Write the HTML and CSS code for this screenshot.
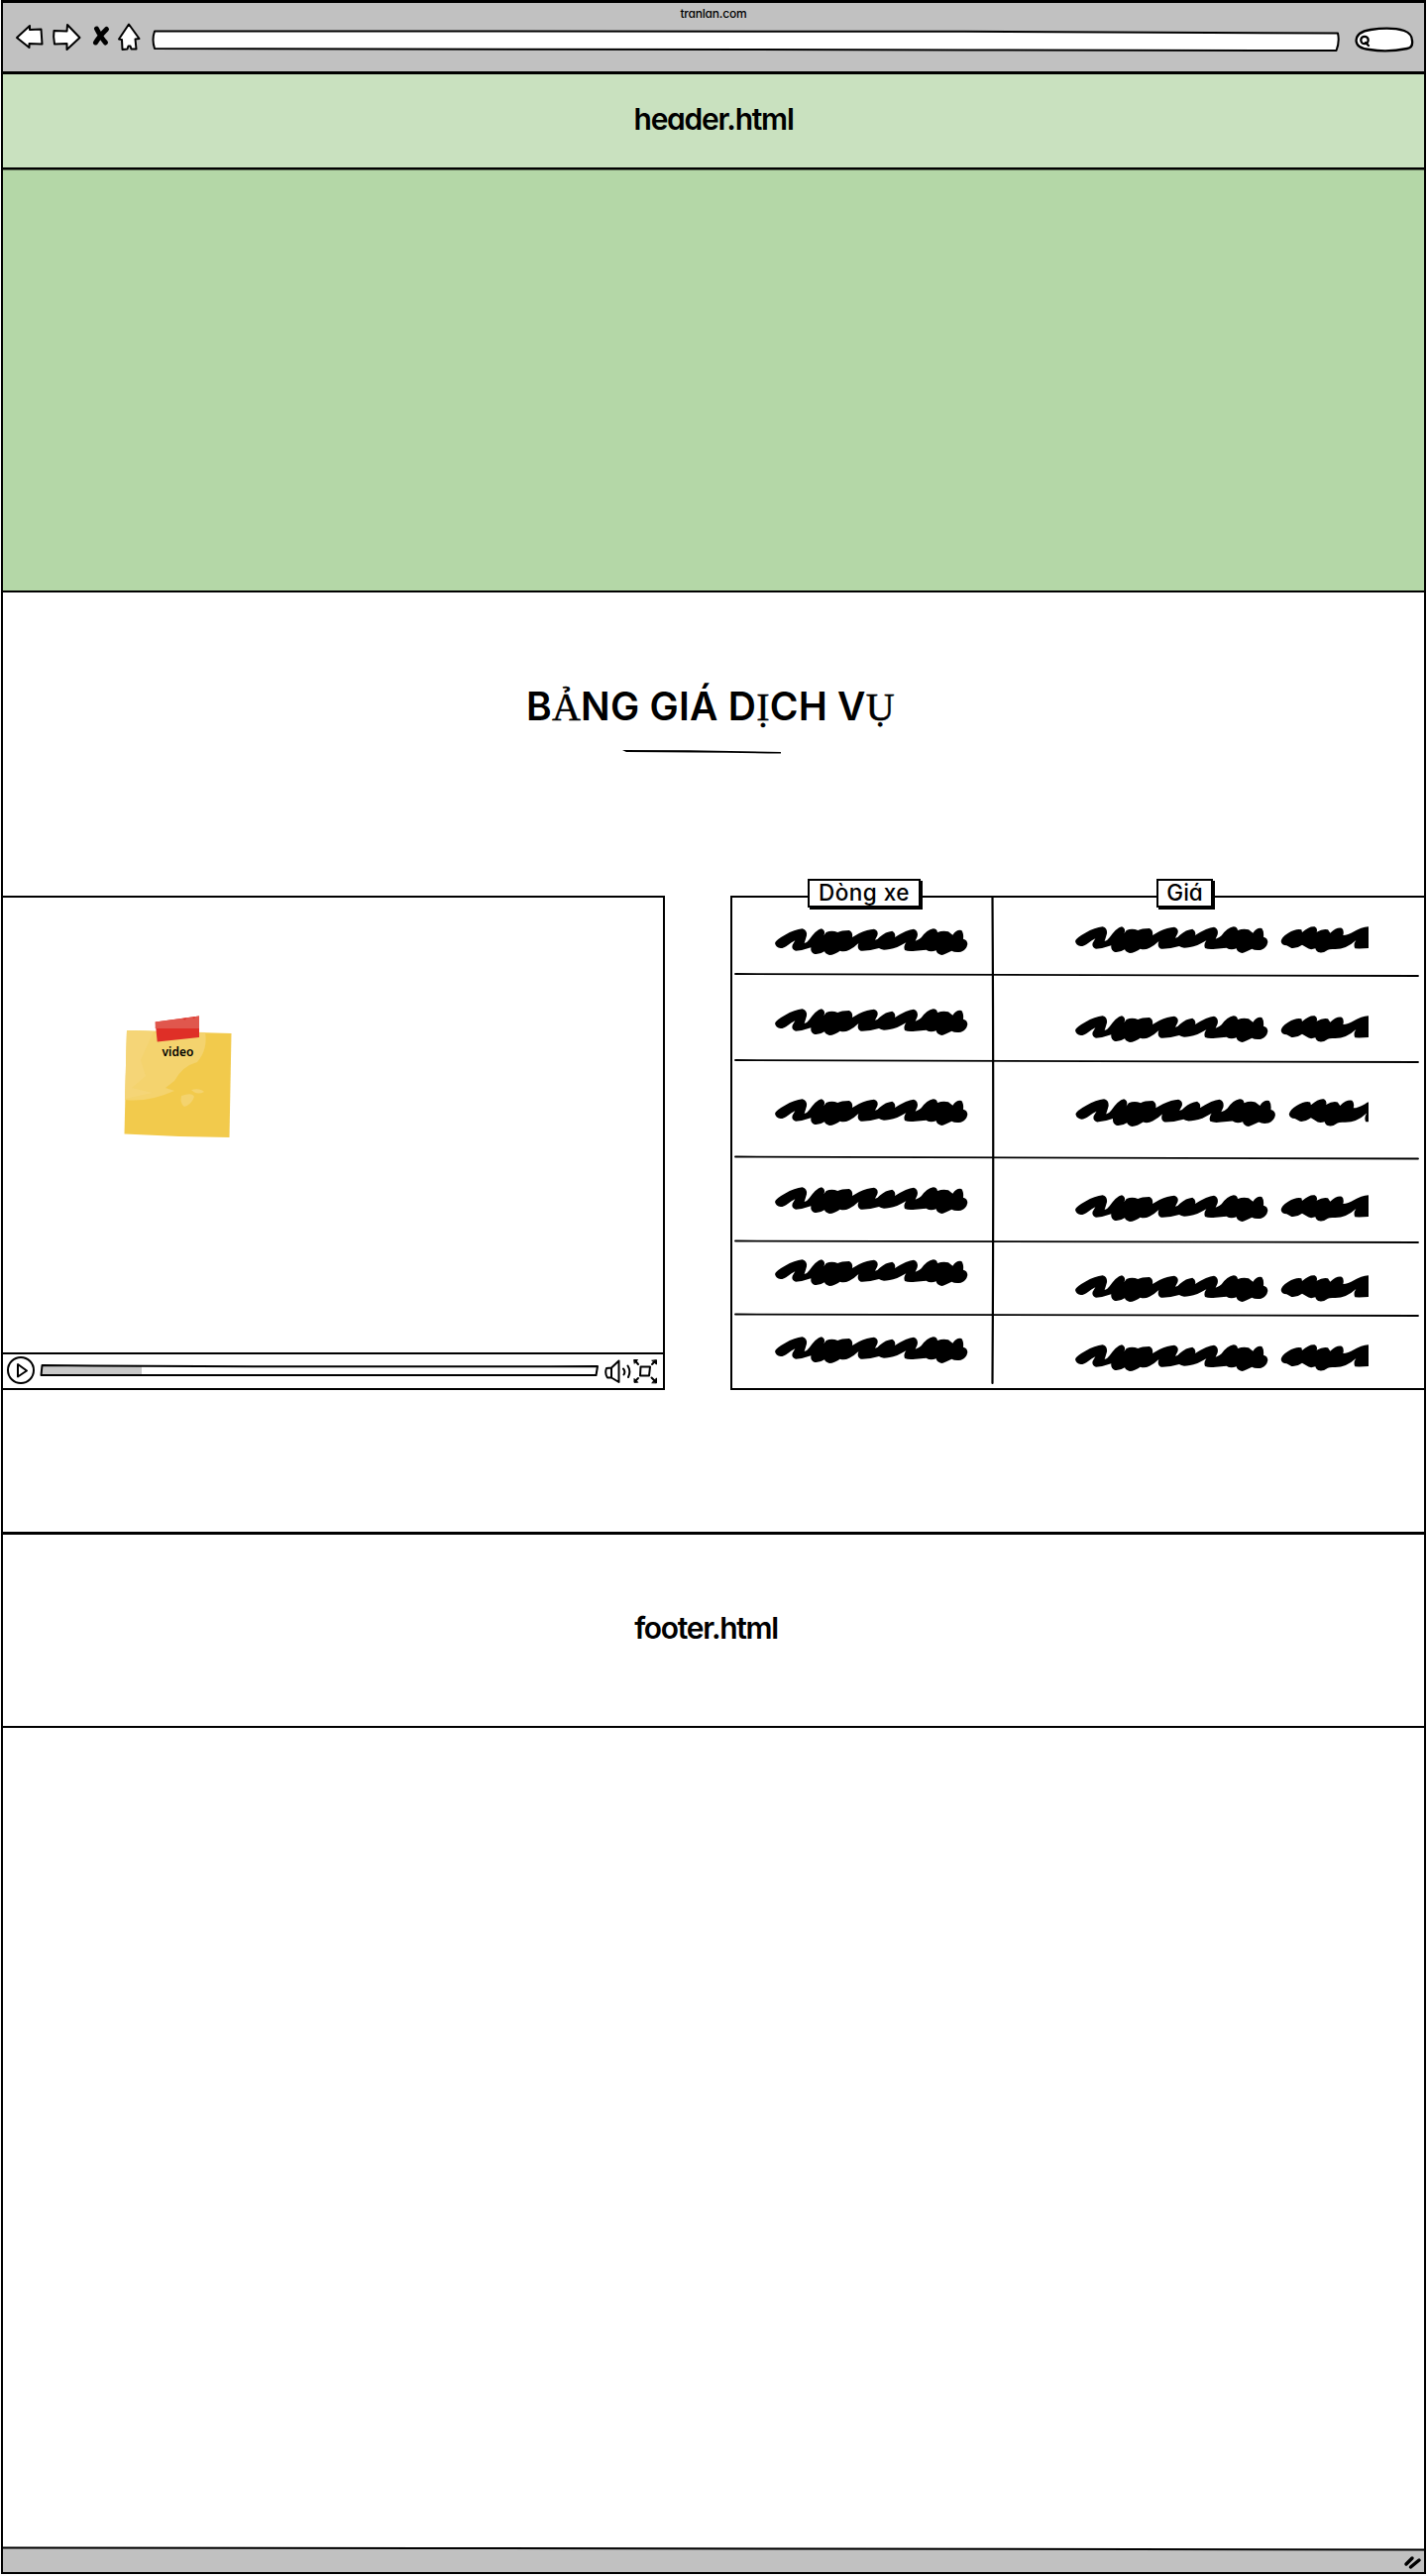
FILE: index.html
```html
<!DOCTYPE html>
<html lang="vi">
<head>
<meta charset="utf-8">
<title>tranlan.com</title>
<link rel="stylesheet" href="styles.css">
</head>
<body>
<svg class="defs" aria-hidden="true">
  <defs>
    <g id="word">
      <path d="M15 75Q17 65 45 50Q75 33 98 31Q113 35 111 52Q108 63 104 75Q112 74 119 64Q140 34 156 31Q170 37 163 52L170 42Q187 35 205 42Q215 36 240 36Q252 42 249 57L270 45Q295 33 315 32Q330 37 325 52L318 65Q326 64 332 56Q350 40 370 38Q382 45 378 57Q415 33 435 32Q450 37 446 55L440 68Q450 66 458 58Q475 34 494 31Q506 32 507 42Q525 35 540 40L553 50Q565 32 580 36Q587 45 585 62Q598 65 598 78Q595 95 578 101Q560 104 550 98Q530 108 520 111Q505 108 503 97Q485 104 473 95L440 98Q420 101 408 96Q403 85 412 73Q400 80 385 87Q360 95 345 95Q335 93 330 90Q300 99 275 98Q262 92 268 75Q255 88 240 95Q225 103 212 98Q195 110 180 111Q168 108 165 100Q150 110 135 108Q122 103 124 88Q100 97 78 98Q64 93 68 80L76 67Q65 72 55 80Q42 90 32 90Q18 88 15 75Z"/>
    </g>
    <g id="tail">
      <path d="M638 75Q640 62 660 50Q685 35 700 40L702 48Q725 28 740 31Q750 37 746 47Q765 36 780 40L787 50Q805 32 822 35Q830 42 826 57Q840 57 860 45Q880 33 903 31V96Q880 98 862 97Q856 85 865 72Q835 100 800 99Q785 98 780 101Q765 112 755 109Q745 108 742 97Q725 103 715 94L702 86Q685 98 670 96L655 88Q640 88 638 75Z"/>
    </g>
  </defs>
</svg>

<div class="browser">
  <header class="toolbar">
    <p class="page-title">tranlan.com</p>
    <div class="controls">
      <svg class="nav-icons" viewBox="0 0 148 34">
        <path d="M14 15L27 3L27 7L38.500 6.500L39.500 21.500L26.500 21L26.500 25Z"/>
        <path d="M51.500 8L64.500 8.500L65 2L77.500 15L64.500 27L64.500 21L52 21.500Q50.500 14 51.500 8Z"/>
        <path class="close" d="M94.500 6Q99 15 103.500 20M104.500 6.500Q97 14 93.500 20"/>
        <path d="M127 1.500L137.500 16L133.500 16.500L134.500 26.500L129.500 26.500L128.500 23.500L126.500 23.500L125.500 26.500L120.500 27L120 17L117 16.500Z"/>
      </svg>
      <svg class="address" viewBox="0 0 1200 24">
        <path d="M4 3.500C500 3 800 3 1198 5.500Q1200 14 1196.500 23C800 23 500 21 4 21Q1 12 4 3.500Z"/>
      </svg>
      <svg class="search" viewBox="0 0 62 28">
        <path d="M17 4Q38 1 51 5Q59 8 59 15Q60 22 54 23Q34 27 16 24Q3 23 2.500 15Q3 6 17 4Z"/>
        <circle cx="11" cy="14.500" r="3.700"/><path d="M12 17L15 20"/>
      </svg>
    </div>
  </header>

  <section class="site-header">header.html</section>
  <section class="banner"></section>

  <main class="content">
    <h1>B<span>Ả</span>NG GIÁ D<span>Ị</span>CH V<span>Ụ</span></h1>
    <svg class="underline" viewBox="0 0 160 5"><path d="M0 0Q80 0 160 2V3.500Q90 2.500 4 2Z"/></svg>

    <div class="columns">
      <div class="player">
        <div class="screen">
          <div class="note">
            <svg viewBox="0 0 112 126">
              <path fill="#f2ca4c" d="M4 15L109.500 18L107.500 123Q54 122.500 1.500 119.500Z"/>
              <path fill="#f4d36e" d="M4 15L83 17Q86 34 75 47Q60 51 52 66L43 73L52 76Q25 88 2 85Z"/>
              <path fill="#f5d77d" d="M4 15L31 16L18 45L23 61L9 73L30 78L2 84Z" opacity=".6"/>
              <path fill="#f4d36e" d="M59 81Q70 77 72 82Q69 90 62 92Q57 88 59 81ZM69 75Q78 73 82 77Q75 81 69 75Z"/>
              <path fill="#df2f27" d="M32.700 6.500L77 .5V22L34.700 26.500Z"/>
              <path fill="#e0574d" d="M32.700 6.500L77 .5V13H32.700Z"/>
              <path fill="#df2f27" d="M60 3.500L64 2.500L63 4.500ZM70 2L73 1.500L72 3Z"/>
            </svg>
            <p>video</p>
          </div>
        </div>
        <div class="player-bar">
          <svg class="play" viewBox="0 0 30 30"><circle cx="15" cy="15" r="13"/><path d="M12 9V21.500L21 15.500Z"/></svg>
          <svg class="track" viewBox="0 0 566 14">
            <path class="played" d="M3 2.500L103 3V11.500L2 11Z"/>
            <path d="M2.500 2Q250 4 563 3L561.500 12H1.500Z"/>
          </svg>
          <svg class="volume" viewBox="0 0 28 28"><path d="M2 10Q0 15 3 19.500H7V9.500ZM7 9.500L14.500 2.500V24L7 19.500M19 10.500Q21.500 13.500 19.500 16.500M23.500 7.500Q27 13 24 19"/></svg>
          <svg class="full" viewBox="0 0 26 28"><path d="M7.500 9.500H17L16 18.500H7ZM5 7L2 3.500M19 7L22 4M5 21L2 24M18.500 20.500L23 25"/><path class="tips" d="M1 2.500H4.500L1.500 6ZM23.500 3V7L19 3.500ZM1 25V21.500L4.500 25ZM23.500 25.500V21L19 25.500Z"/></svg>
        </div>
      </div>

      <div class="prices">
        <span class="label label-model">Dòng xe</span>
        <span class="label label-price">Giá</span>
        <div class="row row-1">
          <svg class="model" viewBox="15 30 588 84"><use href="#word"/></svg>
          <svg class="price" viewBox="15 30 888 84"><use href="#word"/><use href="#tail"/></svg>
        </div>
        <div class="row row-2">
          <svg class="model" viewBox="15 30 588 84"><use href="#word"/></svg>
          <svg class="price" viewBox="15 30 888 84"><use href="#word"/><use href="#tail"/></svg>
        </div>
        <div class="row row-3">
          <svg class="model" viewBox="15 30 588 84"><use href="#word"/></svg>
          <svg class="price" viewBox="15 30 854 81"><use href="#word"/><use href="#tail"/></svg>
        </div>
        <div class="row row-4">
          <svg class="model" viewBox="15 30 588 84"><use href="#word"/></svg>
          <svg class="price" viewBox="15 30 888 84"><use href="#word"/><use href="#tail"/></svg>
        </div>
        <div class="row row-5">
          <svg class="model" viewBox="15 30 588 84"><use href="#word"/></svg>
          <svg class="price" viewBox="15 30 888 84"><use href="#word"/><use href="#tail"/></svg>
        </div>
        <div class="row row-6">
          <svg class="model" viewBox="15 30 588 84"><use href="#word"/></svg>
          <svg class="price" viewBox="15 30 888 84"><use href="#word"/><use href="#tail"/></svg>
        </div>
        <svg class="rules" viewBox="0 0 700 500">
          <path d="M3 79Q300 80.500 692 81M3 166Q300 167.500 692 168M3 263.500Q300 264.500 692 265.500M3 348.500Q300 349.500 692 350M3 422.500Q300 423.500 692 424"/>
          <path class="divider" d="M262.500 0Q264 250 262.500 492"/>
        </svg>
      </div>
    </div>
  </main>

  <footer class="site-footer">footer.html</footer>
  <div class="blank"></div>
  <svg class="status" viewBox="0 0 1434 26">
    <path class="fill" d="M0 2Q700 0 1434 4V26H0Z"/>
    <path class="edge" d="M0 1.500C500 3 1100 0 1434 3.500"/>
    <path class="grip" d="M1416 18L1422 12M1420.500 21L1429 14"/>
  </svg>
</div>
</body>
</html>
```
FILE: styles.css
```css
* { box-sizing: border-box; }
body {
  margin: 0;
  background: #fff;
  color: #000;
  font-family: Inter, "Liberation Sans", sans-serif;
  font-feature-settings: "cv11";
}
p, h1 { margin: 0; }
svg { display: block; flex: none; fill: none; stroke: #000; stroke-width: 2; stroke-linejoin: round; stroke-linecap: round; }
.defs { position: absolute; width: 0; height: 0; }

.browser {
  display: flex;
  flex-direction: column;
  width: 1438px;
  height: 2598px;
  margin: 0 1px;
  border: 2px solid #000;
  border-top-width: 3px;
}
.toolbar { height: 72px; background: #c1c1c1; border-bottom: 3px solid #000; }
.page-title { height: 20px; line-height: 21px; font-size: 12px; text-align: center; letter-spacing: -.2px; font-weight: 500; }
.controls { display: flex; }
.nav-icons { width: 148px; height: 34px; }
.nav-icons path, .address path, .search path { fill: #fff; }
.nav-icons .close { fill: none; stroke-width: 5; }
.address { width: 1200px; height: 24px; margin: 5px 0 0 1px; }
.search { width: 62px; height: 28px; margin: 3px 0 0 14px; stroke-width: 2.3; }

.site-header {
  height: 96px;
  background: #c9e1bf;
  border-bottom: 2px solid #000;
  box-shadow: 0 1px 0 rgba(0, 0, 0, .5);
  position: relative;
  font-size: 30px;
  font-weight: 600;
  letter-spacing: -1.25px;
  line-height: 91px;
  text-align: center;
}
.banner { height: 427px; background: #b4d7a7; border-bottom: 2px solid #000; }

.content { height: 951px; border-bottom: 3px solid #000; }
h1 {
  height: 159px;
  padding: 87px 0 0 528px;
  font-size: 39px;
  font-weight: 600;
  letter-spacing: .25px;
  line-height: 56px;
  white-space: nowrap;
}
h1 span { font-family: "Liberation Serif", serif; font-weight: 400; font-size: 40px; line-height: 1; -webkit-text-stroke: .5px #000; }
.underline { width: 160px; height: 5px; margin-left: 625px; fill: #000; stroke: none; }

.columns { display: flex; gap: 66px; padding-top: 142px; }
.player { width: 669px; height: 499px; border: solid #000; border-width: 2px 2px 2px 0; }
.screen { height: 459px; padding: 119px 0 0 121px; }
.note { width: 112px; height: 126px; position: relative; }
.note svg { width: 112px; height: 126px; stroke: none; }
.note p { position: absolute; top: 28px; left: 0; width: 111px; font: 600 12px/18px "Noto Sans", sans-serif; text-align: center; }
.player-bar { display: flex; align-items: flex-start; height: 36px; border-top: 2px solid #000; padding: 1px 0 0 3px; }
.play { width: 30px; height: 30px; }
.track { width: 566px; height: 14px; margin: 8px 0 0 4px; }
.track .played { fill: #c8c8c8; stroke: none; }
.volume { width: 28px; height: 28px; margin: 3px 0 0 4px; }
.full { width: 26px; height: 28px; margin: 2px 0 0 1px; }
.full .tips { fill: #000; stroke-width: 1; }

.prices { position: relative; width: 701px; height: 499px; border: 2px solid #000; border-width: 2px 0 2px 2px; }
.label {
  position: absolute;
  z-index: 1;
  top: -19px;
  height: 29px;
  background: #fff;
  border: 2px solid #000;
  box-shadow: 2px 2px 0 #000;
  font-size: 22.5px;
  font-weight: 500;
  line-height: 24px;
  text-align: center;
  white-space: nowrap;
}
.label-model { left: 76px; width: 114px; letter-spacing: .5px; }
.label-price { left: 428px; width: 57px; }
.row { display: flex; align-items: flex-start; padding-left: 43px; }
.row svg { fill: #000; stroke: none; }
.model { width: 196px; height: 28px; }
.price { width: 296px; height: 28px; margin-left: 107px; }
.row-1 { height: 78px; }
.row-1 .model { margin-top: 31px; }
.row-1 .price { margin-top: 29px; }
.row-2 { height: 87px; }
.row-2 .model { margin-top: 34px; }
.row-2 .price { margin-top: 41px; }
.row-3 { height: 97px; }
.row-3 .model, .row-3 .price { margin-top: 38px; }
.row-4 { height: 85px; }
.row-4 .model { margin-top: 30px; }
.row-4 .price { margin-top: 38px; }
.row-5 { height: 74px; }
.row-5 .model { margin-top: 18px; }
.row-5 .price { margin-top: 34px; }
.row-6 .model { margin-top: 22px; }
.row-6 .price { margin-top: 30px; }
.rules { position: absolute; top: -2px; left: 0; width: 700px; height: 500px; stroke-width: 1.8; }
.rules .divider { stroke-width: 2.2; }

.site-footer {
  height: 195px;
  padding-right: 15px;
  border-bottom: 2px solid #000;
  font-size: 30px;
  font-weight: 600;
  letter-spacing: -1.3px;
  line-height: 188px;
  text-align: center;
}
.blank { flex: 1; }
.status { width: 1434px; height: 26px; }
.status .fill { fill: #c1c1c1; stroke: none; }
.status .grip { stroke-width: 3.5; }
```
